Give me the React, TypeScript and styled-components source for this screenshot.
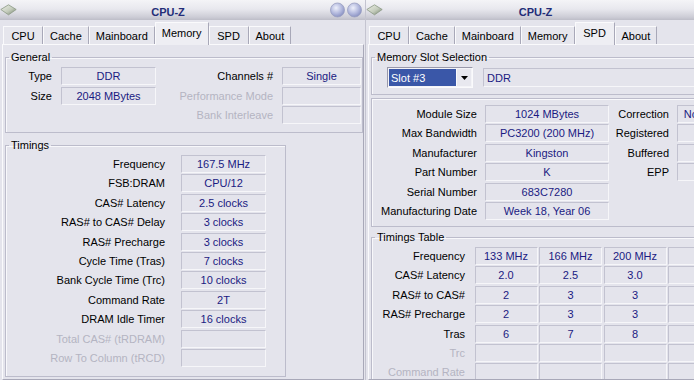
import React from 'react';
import styled, { createGlobalStyle } from 'styled-components';

const Global = createGlobalStyle`
  html, body {
    margin: 0;
    padding: 0;
    overflow: hidden;
  }
  body {
    width: 694px;
    height: 380px;
    background: #e4e4ec;
    font-family: "Liberation Sans", Arial, sans-serif;
    font-size: 11px;
    color: #000;
  }
`;

const Desktop = styled.div`
  display: flex;
  gap: 1px;
  width: 694px;
  height: 380px;
  overflow: hidden;
  background: #c4c4d0;
`;

const Window = styled.div`
  flex: 0 0 365px;
  height: 380px;
  display: flex;
  flex-direction: column;
  background: #e4e4ec;
`;

const TitleBar = styled.div`
  height: 20px;
  display: flex;
  align-items: center;
  padding-right: 2px;
  background: linear-gradient(#f4f4f7 0%, #e8e8ee 45%, #cdcdd6 85%, #bdbdc8 100%);
`;

const Title = styled.div`
  flex: 1;
  text-align: center;
  padding-right: 11px;
  padding-top: 3px;
  font-weight: bold;
  font-size: 11px;
  color: #232d78;
`;

const TabStrip = styled.div`
  height: 24px;
  display: flex;
  align-items: flex-end;
  padding-left: 3px;
`;

const Tab = styled.div<{ $active?: boolean }>`
  min-width: 40px;
  box-sizing: border-box;
  height: ${(p) => (p.$active ? '23px' : '18px')};
  padding: ${(p) => (p.$active ? '0 6px 3px' : '0 6px')};
  display: flex;
  align-items: center;
  justify-content: center;
  background: ${(p) => (p.$active ? '#eeeef3' : '#e6e6ed')};
  border-top: 1px solid #fafafc;
  border-left: 1px solid #fafafc;
  border-right: 1px solid #a8a8b8;
  margin-bottom: ${(p) => (p.$active ? '-1px' : '0')};
  position: relative;
  z-index: ${(p) => (p.$active ? 1 : 0)};
`;

const Page = styled.div`
  flex: 1;
  margin: 0 1px 0 2px;
  padding: 6px 0 0 2px;
  border: 1px solid;
  border-color: #fafafc #a8a8b8 #a8a8b8 #fafafc;
  background: #e4e4ec;
  overflow: hidden;
`;

const Group = styled.fieldset<{ $width?: number; $gap?: number }>`
  margin: ${(p) => (p.$gap ? `${p.$gap}px` : '0')} 0 0 0;
  padding: 0;
  width: ${(p) => (p.$width ? `${p.$width}px` : 'auto')};
  box-sizing: border-box;
  border: 1px solid #bcbccb;
  box-shadow: inset 1px 1px 0 #f8f8fb;
  min-width: 0;
`;

const Legend = styled.legend`
  margin-left: 3px;
  padding: 0 2px;
  line-height: 13px;
  font-size: 11px;
`;

const Grid = styled.div<{ $cols: string; $colGap: number; $rowGap: number; $pad: string }>`
  display: grid;
  grid-template-columns: ${(p) => p.$cols};
  grid-auto-rows: 18px;
  column-gap: ${(p) => p.$colGap}px;
  row-gap: ${(p) => p.$rowGap}px;
  padding: ${(p) => p.$pad};
`;

const Label = styled.div<{ $disabled?: boolean; $pad?: number }>`
  display: flex;
  align-items: center;
  justify-content: flex-end;
  white-space: nowrap;
  padding-right: ${(p) => p.$pad || 0}px;
  color: ${(p) => (p.$disabled ? '#b4b4c2' : '#000')};
`;

const Value = styled.div<{ $left?: boolean }>`
  display: flex;
  align-items: center;
  justify-content: ${(p) => (p.$left ? 'flex-start' : 'center')};
  padding-left: ${(p) => (p.$left ? '3px' : '0')};
  box-sizing: border-box;
  white-space: nowrap;
  color: #1a1a82;
  border: 1px solid;
  border-color: #c2c2d0 #f6f6f9 #f6f6f9 #c2c2d0;
  overflow: hidden;
`;

const Spacer = styled.div``;

const SlotRow = styled.div`
  display: flex;
  align-items: center;
  gap: 10px;
  height: 21px;
  margin-top: 3px;
  padding: 0 15px 6px 15px;
`;

const Select = styled.div`
  width: 86px;
  height: 21px;
  box-sizing: border-box;
  display: flex;
  padding: 1px;
  border: 1px solid;
  border-color: #9898aa #fafafc #fafafc #9898aa;
  background: #f4f4f8;
`;

const SelectText = styled.div`
  flex: 1;
  display: flex;
  align-items: center;
  padding-left: 2px;
  color: #fff;
  background: #3a57a8;
`;

const SelectButton = styled.div`
  width: 14px;
  display: flex;
  align-items: center;
  justify-content: center;
  background: #e8e8ef;
  border-left: 1px solid #fafafc;
`;

const SlotType = styled(Value)`
  flex: 1;
  height: 19px;
`;

const InfoPanel = styled.div`
  margin-top: 3px;
  border: 1px solid #bcbccb;
  box-shadow: inset 1px 1px 0 #f8f8fb;
`;

const Diamond = () => (
  <svg width="17" height="12" viewBox="0 0 17 12">
    <defs>
      <linearGradient id="dia" x1="0" y1="0" x2="1" y2="1">
        <stop offset="0" stopColor="#eef0e8" />
        <stop offset="0.55" stopColor="#c4ccbc" />
        <stop offset="1" stopColor="#6f8068" />
      </linearGradient>
    </defs>
    <polygon points="0.8,5.5 8.5,0.8 16.2,5.5 8.5,10.8" fill="url(#dia)" stroke="#8a9884" strokeWidth="0.8" />
  </svg>
);

const Buttons = () => (
  <svg width="33" height="16" viewBox="0 0 33 16">
    <defs>
      <radialGradient id="btn" cx="0.4" cy="0.35" r="0.65">
        <stop offset="0" stopColor="#eef0fb" />
        <stop offset="0.6" stopColor="#b4bade" />
        <stop offset="1" stopColor="#8c94c4" />
      </radialGradient>
    </defs>
    <circle cx="7.5" cy="8" r="7" fill="url(#btn)" stroke="#9aa0c0" strokeWidth="0.8" />
    <circle cx="24.5" cy="8" r="7" fill="url(#btn)" stroke="#9aa0c0" strokeWidth="0.8" />
  </svg>
);

const DownArrow = () => (
  <svg width="7" height="4" viewBox="0 0 7 4">
    <polygon points="0,0 7,0 3.5,4" fill="#000" />
  </svg>
);

const tabs = ['CPU', 'Cache', 'Mainboard', 'Memory', 'SPD', 'About'];

const Tabs = ({ active }: { active: string }) => (
  <TabStrip>
    {tabs.map((t) => (
      <Tab key={t} $active={t === active}>{t}</Tab>
    ))}
  </TabStrip>
);

const timings: [string, string, boolean?][] = [
  ['Frequency', '167.5 MHz'],
  ['FSB:DRAM', 'CPU/12'],
  ['CAS# Latency', '2.5 clocks'],
  ['RAS# to CAS# Delay', '3 clocks'],
  ['RAS# Precharge', '3 clocks'],
  ['Cycle Time (Tras)', '7 clocks'],
  ['Bank Cycle Time (Trc)', '10 clocks'],
  ['Command Rate', '2T'],
  ['DRAM Idle Timer', '16 clocks'],
  ['Total CAS# (tRDRAM)', '', true],
  ['Row To Column (tRCD)', '', true],
];

const spdRows: [string, string, string, string][] = [
  ['Module Size', '1024 MBytes', 'Correction', 'None'],
  ['Max Bandwidth', 'PC3200 (200 MHz)', 'Registered', ''],
  ['Manufacturer', 'Kingston', 'Buffered', ''],
  ['Part Number', 'K', 'EPP', ''],
  ['Serial Number', '683C7280', '', ''],
  ['Manufacturing Date', 'Week 18, Year 06', '', ''],
];

const tableRows: [string, string[], boolean?][] = [
  ['Frequency', ['133 MHz', '166 MHz', '200 MHz', '']],
  ['CAS# Latency', ['2.0', '2.5', '3.0', '']],
  ['RAS# to CAS#', ['2', '3', '3', '']],
  ['RAS# Precharge', ['2', '3', '3', '']],
  ['Tras', ['6', '7', '8', '']],
  ['Trc', ['', '', '', ''], true],
  ['Command Rate', ['', '', '', ''], true],
];

const MemoryWindow = () => (
  <Window>
    <TitleBar>
      <Diamond />
      <Title>CPU-Z</Title>
      <Buttons />
    </TitleBar>
    <Tabs active="Memory" />
    <Page>
      <Group>
        <Legend>General</Legend>
        <Grid $cols="46px 95px 1fr 79px" $colGap={9} $rowGap={1.5} $pad="3px 1px 8px 0">
          <Label>Type</Label>
          <Value>DDR</Value>
          <Label>Channels #</Label>
          <Value>Single</Value>
          <Label>Size</Label>
          <Value>2048 MBytes</Value>
          <Label $disabled>Performance Mode</Label>
          <Value />
          <Spacer />
          <Spacer />
          <Label $disabled>Bank Interleave</Label>
          <Value />
        </Grid>
      </Group>
      <Group $width={281} $gap={6}>
        <Legend>Timings</Legend>
        <Grid $cols="1fr 85px" $colGap={16} $rowGap={1.4} $pad="3px 19px 9px 0">
          {timings.map(([l, v, d]) => (
            <React.Fragment key={l}>
              <Label $disabled={d}>{l}</Label>
              <Value>{v}</Value>
            </React.Fragment>
          ))}
        </Grid>
      </Group>
    </Page>
  </Window>
);

const SpdWindow = () => (
  <Window>
    <TitleBar>
      <Diamond />
      <Title>CPU-Z</Title>
      <Buttons />
    </TitleBar>
    <Tabs active="SPD" />
    <Page>
      <Group>
        <Legend>Memory Slot Selection</Legend>
        <SlotRow>
          <Select>
            <SelectText>Slot #3</SelectText>
            <SelectButton>
              <DownArrow />
            </SelectButton>
          </Select>
          <SlotType $left>DDR</SlotType>
        </SlotRow>
      </Group>
      <InfoPanel>
        <Grid $cols="105px 124px 52px 40px" $colGap={8} $rowGap={1.4} $pad="6px 0 6px 0">
          {spdRows.map(([l, v, l2, v2]) => (
            <React.Fragment key={l}>
              <Label>{l}</Label>
              <Value>{v}</Value>
              {l2 ? <Label>{l2}</Label> : <Spacer />}
              {l2 ? <Value>{v2}</Value> : <Spacer />}
            </React.Fragment>
          ))}
        </Grid>
      </InfoPanel>
      <Group $gap={4}>
        <Legend>Timings Table</Legend>
        <Grid $cols="101px repeat(4, 63px)" $colGap={1.5} $rowGap={1.4} $pad="3px 0 6px 0">
          {tableRows.map(([l, vals, d]) => (
            <React.Fragment key={l}>
              <Label $disabled={d} $pad={8}>{l}</Label>
              {vals.map((v, i) => (
                <Value key={i}>{v}</Value>
              ))}
            </React.Fragment>
          ))}
        </Grid>
      </Group>
    </Page>
  </Window>
);

export default function App() {
  return (
    <>
      <Global />
      <Desktop>
        <MemoryWindow />
        <SpdWindow />
      </Desktop>
    </>
  );
}
